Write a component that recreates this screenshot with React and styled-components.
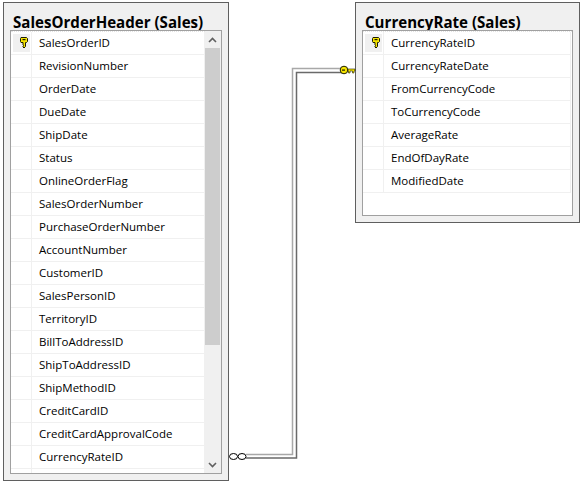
import styled, {createGlobalStyle} from 'styled-components'

const ORDER_COLUMNS = [
    'SalesOrderID', 'RevisionNumber', 'OrderDate', 'DueDate', 'ShipDate', 'Status', 'OnlineOrderFlag',
    'SalesOrderNumber', 'PurchaseOrderNumber', 'AccountNumber', 'CustomerID', 'SalesPersonID', 'TerritoryID',
    'BillToAddressID', 'ShipToAddressID', 'ShipMethodID', 'CreditCardID', 'CreditCardApprovalCode',
    'CurrencyRateID', '',
]

const RATE_COLUMNS = [
    'CurrencyRateID', 'CurrencyRateDate', 'FromCurrencyCode', 'ToCurrencyCode', 'AverageRate', 'EndOfDayRate',
    'ModifiedDate',
]

const KeyIcon = () => (
    <svg width="8" height="12" viewBox="0 0 8 12">
        <path d="M1 .5h5.500l1 1v3l-1 1H5.500v4l-1.500 1.500-1-1v-1l.5-.5-.5-.5V5.500H1l-.5-1v-3z"
              fill="#f5e400" stroke="#1c1c00" strokeWidth="1"/>
        <rect x="2.500" y="2" width="3" height="1.200" fill="#1c1c00"/>
    </svg>
)

const Columns = ({columns, scroll}) => (
    <Grid>
        <Rows $scroll={scroll}>
            {columns.map((name, index) =>
                <Row key={index}>
                    <Selector>{index === 0 && <KeyBox><KeyIcon/></KeyBox>}</Selector>
                    <ColumnName>{name}</ColumnName>
                </Row>
            )}
        </Rows>
        {scroll &&
            <Scrollbar>
                <Arrow viewBox="0 0 9 6"><path d="M1 5l3.500-3.500L8 5" fill="none" stroke="#606060" strokeWidth="1.600"/></Arrow>
                <Thumb/>
                <Arrow viewBox="0 0 9 6"><path d="M1 1l3.500 3.500L8 1" fill="none" stroke="#606060" strokeWidth="1.600"/></Arrow>
            </Scrollbar>
        }
    </Grid>
)

const App = () => (
    <>
        <GlobalStyle/>
        <Canvas>
            <OrderNode>
                <Title>SalesOrderHeader (Sales)</Title>
                <Columns columns={ORDER_COLUMNS} scroll/>
            </OrderNode>
            <RateNode>
                <Title>CurrencyRate (Sales)</Title>
                <Columns columns={RATE_COLUMNS}/>
            </RateNode>
            <Connector viewBox="0 0 584 484">
                <path d="M246 454.500H292.500V68.500H342" fill="none" stroke="#a8a8a8" strokeWidth="1.500"/>
                <path d="M246 458H296.500V72.500H342" fill="none" stroke="#6a6a6a" strokeWidth="1.500"/>
                <ellipse cx="233.500" cy="456.500" rx="4" ry="3" fill="#fff" stroke="#000"/>
                <ellipse cx="242" cy="456.500" rx="4" ry="3" fill="#fff" stroke="#000"/>
                <circle cx="344" cy="70" r="3.800" fill="#f5e400" stroke="#1c1c00"/>
                <path d="M348 69h7v2h-1v2h-1.500v-2H350v2h-1.500v-2H348z" fill="#f5e400" stroke="#1c1c00" strokeWidth=".6"/>
                <rect x="342" y="69.500" width="3" height="1.200" fill="#1c1c00"/>
            </Connector>
        </Canvas>
    </>
)

export default App

const GlobalStyle = createGlobalStyle`
  html, body {
    margin: 0;
    background: #fff;
  }
`

const Canvas = styled.div`
  position: relative;
  width: 584px;
  height: 484px;
  overflow: hidden;
  background: #fff;
  font-family: "Open Sans", "Noto Sans", sans-serif;
  color: #000;
`

const Connector = styled.svg`
  position: absolute;
  inset: 0;
  width: 584px;
  height: 484px;
  pointer-events: none;
`

const OrderNode = styled.div`
  position: absolute;
  box-sizing: border-box;
  display: flex;
  flex-direction: column;
  left: 3px;
  top: 2px;
  width: 226px;
  height: 479px;
  padding: 0 6px 6px 6px;
  background: #f0f0f0;
  border: 1px solid #5f5f5f;
`

const RateNode = styled(OrderNode)`
  left: 355px;
  width: 225px;
  height: 221px;
`

const Title = styled.div`
  flex: none;
  box-sizing: border-box;
  height: 27px;
  padding: 10px 0 0 3px;
  line-height: 19px;
  font-size: 15.100px;
  font-weight: 700;
  white-space: nowrap;
`

const Grid = styled.div`
  flex: 1;
  min-height: 0;
  display: flex;
  background: #fff;
  border: 1px solid #a0a0a0;
  overflow: hidden;
`

const Rows = styled.div`
  flex: 1;
  min-width: 0;
  padding-right: ${props => props.$scroll ? '0' : '1px'};
  border-top: 1px dotted #e4e4e4;
`

const Row = styled.div`
  box-sizing: border-box;
  height: 23px;
  display: flex;
  align-items: center;
  border-bottom: 1px solid #f0f0f0;
  border-right: 1px solid #f0f0f0;
`

const Selector = styled.div`
  flex: none;
  box-sizing: border-box;
  width: 20px;
  height: 100%;
  margin-left: 1px;
  padding: 2px 1px;
  border-right: 1px solid #f0f0f0;
  background-image: radial-gradient(#e4e4e4 0.6px, transparent 0.7px);
  background-size: 4px 4px;
`

const KeyBox = styled.div`
  box-sizing: border-box;
  height: 100%;
  padding-left: 4px;
  display: flex;
  align-items: center;
  justify-content: center;
  background: #f0f0f0;
`

const ColumnName = styled.span`
  margin-left: 7px;
  padding-bottom: 2px;
  font-size: 11.500px;
  white-space: nowrap;
`

const Scrollbar = styled.div`
  flex: none;
  box-sizing: border-box;
  width: 16px;
  padding-right: 1px;
  display: flex;
  flex-direction: column;
  align-items: center;
  background: #f0f0f0;
`

const Arrow = styled.svg`
  flex: none;
  width: 9px;
  height: 6px;
  margin: 6px 0 5px;
`

const Thumb = styled.div`
  flex: none;
  align-self: stretch;
  height: 297px;
  margin-bottom: auto;
  background: #cdcdcd;
`
